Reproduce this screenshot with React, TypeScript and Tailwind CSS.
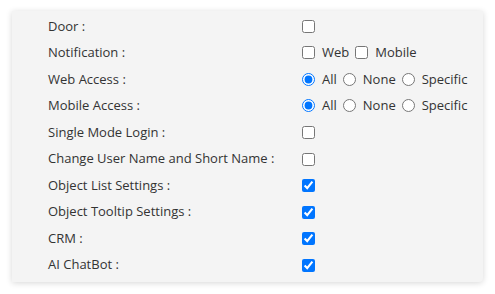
import React from 'react';

type Row = {
  label: string;
  kind: 'check' | 'notify' | 'access';
  checked?: boolean;
};

const rows: Row[] = [
  { label: 'Door :', kind: 'check' },
  { label: 'Notification :', kind: 'notify' },
  { label: 'Web Access :', kind: 'access' },
  { label: 'Mobile Access :', kind: 'access' },
  { label: 'Single Mode Login :', kind: 'check' },
  { label: 'Change User Name and Short Name :', kind: 'check' },
  { label: 'Object List Settings :', kind: 'check', checked: true },
  { label: 'Object Tooltip Settings :', kind: 'check', checked: true },
  { label: 'CRM :', kind: 'check', checked: true },
  { label: 'AI ChatBot :', kind: 'check', checked: true },
];

function Control({ row, idx }: { row: Row; idx: number }) {
  if (row.kind === 'notify') {
    return (
      <div className="flex items-center">
        <input type="checkbox" className="m-0 h-[13px] w-[13px]" />
        <span className="ml-[7px] mr-[6px]">Web</span>
        <input type="checkbox" className="m-0 h-[13px] w-[13px]" />
        <span className="ml-[7px]">Mobile</span>
      </div>
    );
  }
  if (row.kind === 'access') {
    const name = `access-${idx}`;
    return (
      <div className="flex items-center">
        <input type="radio" name={name} defaultChecked className="m-0 h-[13px] w-[13px]" />
        <span className="ml-[7px] mr-[6px]">All</span>
        <input type="radio" name={name} className="m-0 h-[13px] w-[13px]" />
        <span className="ml-[7px] mr-[6px]">None</span>
        <input type="radio" name={name} className="m-0 h-[13px] w-[13px]" />
        <span className="ml-[7px]">Specific</span>
      </div>
    );
  }
  return (
    <div className="flex items-center">
      <input type="checkbox" defaultChecked={row.checked} className="m-0 h-[13px] w-[13px]" />
    </div>
  );
}

export default function App() {
  return (
    <div className="w-[495px] h-[294px] bg-white pt-[11px] pl-[12px]">
      <div
        className="w-[471px] h-[271px] bg-[#f4f4f4] rounded-br-[4px] shadow-[0_1px_6px_rgba(0,0,0,0.16)] pl-[36px] pt-[2px] text-[13px] text-[#333333]"
        style={{ fontFamily: '"Open Sans", "Noto Sans", sans-serif' }}
      >
        {rows.map((row, i) => (
          <div key={row.label} className="flex items-center h-[26.55px]">
            <div className="w-[254px]">{row.label}</div>
            <Control row={row} idx={i} />
          </div>
        ))}
      </div>
    </div>
  );
}
